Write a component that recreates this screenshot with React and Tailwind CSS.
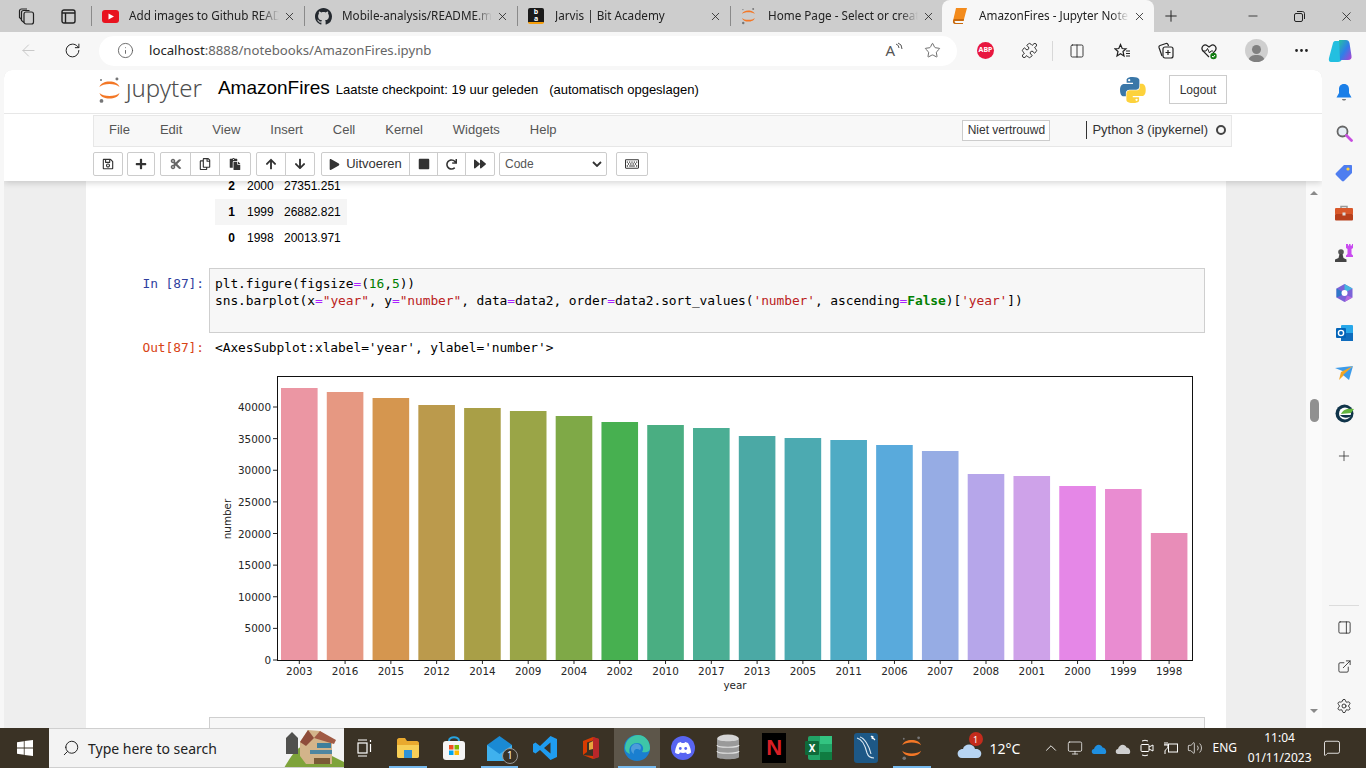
import {
  ArrowLeft, RotateCw, Info, Star, X, Plus, Minus, Search, Puzzle, Columns2, Ellipsis,
  PanelRight, ExternalLink, Settings, ChevronUp, Volume2, MessageSquare, Monitor,
} from "lucide-react";
import {
  FaRegSave, FaPlus, FaCut, FaRegCopy, FaPaste, FaArrowUp, FaArrowDown, FaPlay, FaStop, FaRedo, FaForward, FaRegKeyboard,
} from "react-icons/fa";

const bars = [
  ["2003", 388, "#eb96a3"], ["2016", 392, "#e69882"], ["2015", 398, "#d5964f"], ["2012", 405, "#bb9a4c"],
  ["2014", 408, "#a99f47"], ["2009", 411, "#9aa547"], ["2004", 416, "#7fa947"], ["2002", 422, "#47b050"],
  ["2010", 425, "#4aae82"], ["2017", 428, "#4bae94"], ["2013", 436, "#4ba9a5"], ["2005", 438, "#4caab1"],
  ["2011", 440, "#4fabc4"], ["2006", 445, "#59aadc"], ["2007", 451, "#96ace4"], ["2008", 474, "#b6a6ea"],
  ["2001", 476, "#cea2e9"], ["2000", 486, "#e587e7"], ["1999", 489, "#e98cd1"], ["1998", 533, "#e88db8"],
];

const yTicks = [0, 5000, 10000, 15000, 20000, 25000, 30000, 35000, 40000];

function JupyterMark({ size = 28 }) {
  return (
    <svg width={size * 0.82} height={size} viewBox="0 0 23 28">
      <path d="M1.5 11C3 3.5 20 3.5 21.5 11C18 7 5 7 1.5 11Z" fill="#f37726" />
      <path d="M1.5 17C3 24.5 20 24.5 21.5 17C18 21 5 21 1.5 17Z" fill="#f37726" />
      <circle cx="19" cy="3" r="1.5" fill="#767677" />
      <circle cx="3.5" cy="25" r="1.9" fill="#767677" />
      <circle cx="3" cy="4" r="1" fill="#767677" />
    </svg>
  );
}

function Tab({ icon, title, active }) {
  return (
    <div className={`relative flex h-8 w-[212px] shrink-0 items-center pl-[10px] pr-2 ${active ? "rounded-t-lg bg-[#f7f7f7]" : ""}`}>
      <div className="flex w-[27px] shrink-0 items-center">{icon}</div>
      <span className="w-[150px] overflow-hidden whitespace-nowrap text-[11.7px] text-[#222] [mask-image:linear-gradient(to_right,#000_88%,transparent)]">{title}</span>
      <X size={13} strokeWidth={1.5} className="ml-auto text-[#222]" />
    </div>
  );
}

function TabSep() {
  return <div className="h-5 w-px shrink-0 bg-[#8a8a8a]" />;
}

function TabBar() {
  return (
    <div className="flex h-8 items-center bg-[#cdcdcd]">
      <div className="flex w-[52px] justify-center">
        <svg width="17" height="17" viewBox="0 0 17 17" fill="none" stroke="#222" strokeWidth="1.2">
          <rect x="6" y="4" width="9.5" height="12" rx="2" />
          <path d="M6 14.5L3.5 12.5V4.5C3.5 3 4.5 2.5 5.5 2.5H11.5M3.5 11.5L1.5 9.5V3C1.5 1.8 2.3 1 3.5 1H9" />
        </svg>
      </div>
      <div className="ml-[3px] flex w-[26px] justify-center">
        <svg width="15" height="15" viewBox="0 0 15 15" fill="none" stroke="#222" strokeWidth="1.4">
          <rect x="1" y="1" width="13" height="13" rx="2" />
          <path d="M1 4H14M4.5 4V14" />
        </svg>
      </div>
      <div className="ml-[10px]"><TabSep /></div>
      <Tab
        title="Add images to Github READ"
        icon={
          <svg width="17" height="13" viewBox="0 0 17 13">
            <rect width="17" height="13" rx="3" fill="#e8131f" />
            <path d="M6.5 3.5L12 6.5L6.5 9.5Z" fill="#fff" />
          </svg>
        }
      />
      <TabSep />
      <Tab
        title="Mobile-analysis/README.md"
        icon={
          <svg width="17" height="17" viewBox="0 0 16 16" fill="#24292f">
            <path d="M8 0C3.58 0 0 3.58 0 8c0 3.54 2.29 6.53 5.47 7.59.4.07.55-.17.55-.38 0-.19-.01-.82-.01-1.49-2.01.37-2.53-.49-2.69-.94-.09-.23-.48-.94-.82-1.13-.28-.15-.68-.52-.01-.53.63-.01 1.08.58 1.23.82.72 1.21 1.87.87 2.33.66.07-.52.28-.87.51-1.07-1.78-.2-3.64-.89-3.64-3.95 0-.87.31-1.59.82-2.15-.08-.2-.36-1.02.08-2.12 0 0 .67-.21 2.2.82.64-.18 1.32-.27 2-.27s1.36.09 2 .27c1.53-1.04 2.2-.82 2.2-.82.44 1.1.16 1.92.08 2.12.51.56.82 1.27.82 2.15 0 3.07-1.87 3.75-3.65 3.95.29.25.54.73.54 1.48 0 1.07-.01 1.93-.01 2.2 0 .21.15.46.55.38A8.01 8.01 0 0016 8c0-4.42-3.58-8-8-8z" />
          </svg>
        }
      />
      <TabSep />
      <Tab
        title="Jarvis | Bit Academy"
        icon={
          <div className="flex h-4 w-4 flex-col items-center justify-center rounded-[2px] border-b-2 border-[#f59e0b] bg-[#1b1b1b] text-[7px] font-bold leading-[7px] text-white">
            <span>b</span>
            <span>a</span>
          </div>
        }
      />
      <TabSep />
      <Tab title="Home Page - Select or create" icon={<JupyterMark size={18} />} />
      <div className="-ml-[1px]">
        <Tab
          active
          title="AmazonFires - Jupyter Notebook"
          icon={
            <svg width="15" height="16" viewBox="0 0 15 16">
              <path d="M4 0H15L11.5 13H1Z" fill="#f38b1c" />
              <path d="M1 13C1 11.5 2 11 3 11H12L11.5 13H3C2 13 3 15 4 15H11V16H3C1.5 16 .5 14.5 1 13Z" fill="#c96a0d" />
            </svg>
          }
        />
      </div>
      <Plus size={18} strokeWidth={1.3} className="ml-[8px] text-[#222]" />
      <Minus size={14} strokeWidth={1.4} className="ml-[66px] text-[#222]" />
      <svg width="11" height="11" viewBox="0 0 11 11" fill="none" stroke="#222" strokeWidth="1" className="ml-[34px]">
        <rect x=".5" y="2.5" width="8" height="8" rx="1.5" />
        <path d="M3 .5H8.5C9.6.5 10.5 1.4 10.5 2.5V8" />
      </svg>
      <X size={15} strokeWidth={1.3} className="ml-[34px] text-[#222]" />
    </div>
  );
}

function AddressBar() {
  return (
    <div className="flex h-[37px] items-center bg-[#f7f7f7]">
      <div className="flex w-[56px] justify-center">
        <ArrowLeft size={19} strokeWidth={1.2} className="text-[#c6c6c6]" />
      </div>
      <div className="flex w-[32px] justify-center">
        <RotateCw size={17} strokeWidth={1.4} className="text-[#222]" />
      </div>
      <div className="ml-[11px] flex h-[30px] w-[858px] items-center rounded-full bg-white pl-[18px] pr-4">
        <Info size={17} strokeWidth={1.2} className="text-[#555]" />
        <span className="ml-[15px] text-[13.2px] text-[#222]">
          localhost<span className="text-[#666]">:8888/notebooks/AmazonFires.ipynb</span>
        </span>
        <span className="ml-auto flex items-center text-[15px] text-[#555]">
          A
          <svg width="8" height="10" viewBox="0 0 8 10" fill="none" stroke="#555" className="-mt-2">
            <path d="M1 2Q4 3 4 6M3 1Q7 2 7 7" />
          </svg>
        </span>
        <Star size={17} strokeWidth={1.2} className="ml-[21px] text-[#555]" />
      </div>
      <div className="ml-[20px] flex h-[17px] w-[17px] items-center justify-center rounded-full bg-[#e8173f] text-[7px] font-bold text-white">ABP</div>
      <Puzzle size={17} strokeWidth={1.3} className="ml-[27px] text-[#222]" />
      <div className="ml-[14px] h-5 w-px bg-[#d8d8d8]" />
      <Columns2 size={16} strokeWidth={1.3} className="ml-[16px] text-[#222]" />
      <svg width="17" height="16" viewBox="0 0 17 16" fill="none" stroke="#222" strokeWidth="1.2" className="ml-[29px]">
        <path d="M6.5 1.5L8.2 5.5L12 5.8L9 8.5L10 13L6.5 10.7L3 13L4 8.5L1 5.8L4.8 5.5Z" />
        <path d="M12 8H16M12 10.5H16M12 13H16" />
      </svg>
      <svg width="17" height="17" viewBox="0 0 17 17" fill="none" stroke="#222" strokeWidth="1.2" className="ml-[26px]">
        <path d="M5 14L2 5.5C1.7 4.5 2.2 3.8 3 3.5L9 1.5C10 1.2 10.7 1.7 11 2.5L11.5 4" />
        <rect x="6" y="5" width="10" height="11" rx="2" />
        <path d="M11 8V13M8.5 10.5H13.5" />
      </svg>
      <svg width="18" height="18" viewBox="0 0 18 18" className="ml-[26px]">
        <path d="M9 15L2.5 8.5C.5 5 4.5 1.5 7 3.5L9 5L11 3.5C13.5 1.5 17.5 5 15.5 8.5L13 11" fill="none" stroke="#222" strokeWidth="1.2" />
        <path d="M2.5 9H6L7.5 6.5L9.5 11L11 9H13" fill="none" stroke="#222" strokeWidth="1" />
        <circle cx="13.5" cy="14" r="3.2" fill="#107c10" />
        <path d="M12 14L13.2 15.2L15 13" fill="none" stroke="#fff" strokeWidth="1" />
      </svg>
      <div className="ml-[27px] flex h-[23px] w-[23px] flex-col items-center justify-end overflow-hidden rounded-full bg-[#cfcfcf]">
        <div className="mb-[1px] h-[9px] w-[9px] rounded-full bg-[#808080]" />
        <div className="h-[7px] w-[17px] rounded-t-full bg-[#808080]" />
      </div>
      <Ellipsis size={17} strokeWidth={2} className="ml-[25px] text-[#222]" />
      <svg width="24" height="24" viewBox="0 0 24 24" className="ml-[18px]">
        <defs>
          <linearGradient id="cop" x1="0" y1="0" x2="1" y2="1">
            <stop offset="0" stopColor="#25c2a0" />
            <stop offset="0.5" stopColor="#2f7fe8" />
            <stop offset="1" stopColor="#b33fd0" />
          </linearGradient>
        </defs>
        <path d="M7 2H19L14 20C13.5 22 12 23 10 23H3C1 23 .5 21 1 19L5 4C5.3 3 6 2 7 2Z" fill="#23bfe0" />
        <path d="M11 1H18C20 1 21 2 21.5 4L23.5 17C24 19.5 22.5 21 20 21H12Z" fill="url(#cop)" />
      </svg>
    </div>
  );
}

function ToolBtn({ children, w = "w-7", className = "" }) {
  return (
    <div className={`flex h-[24px] shrink-0 items-center justify-center border border-[#ccc] bg-white text-[#333] ${w} ${className}`}>
      {children}
    </div>
  );
}

function NotebookHeader() {
  return (
    <div className="relative z-10 shrink-0 rounded-t-lg bg-white font-['Liberation_Sans',sans-serif] text-[#000] shadow-[0_2px_6px_rgba(0,0,0,0.16)]">
      <div className="flex h-[44px] items-center border-b border-[#e7e7e7] pb-[4px] pl-[94px] pr-[95px]">
        <JupyterMark size={28} />
        <span className="ml-[5px] -mt-[3px] font-['Noto_Sans',sans-serif] text-[24px] font-light leading-none text-[#4e4e4e]">ȷupyter</span>
        <span className="ml-[16px] -mt-[3px] text-[19px]">AmazonFires</span>
        <span className="ml-[6px] mt-[1px] text-[13px]">Laatste checkpoint: 19 uur geleden</span>
        <span className="ml-[11px] mt-[1px] text-[13px]">(automatisch opgeslagen)</span>
        <svg width="28" height="28" viewBox="0 0 110 110" className="ml-auto">
          <path d="M54 4C28 4 30 15 30 15V27H55V31H20S4 29 4 55S18 80 18 80H27V68S26 54 41 54H66S80 54 80 40V17S82 4 54 4ZM40 12A4.5 4.5 0 1140 21A4.5 4.5 0 0140 12Z" fill="#3a77a8" />
          <path d="M55 106C81 106 79 95 79 95V83H54V79H89S105 81 105 55S91 30 91 30H82V42S83 56 68 56H43S29 56 29 70V93S27 106 55 106ZM69 98A4.5 4.5 0 1169 89A4.5 4.5 0 0169 98Z" fill="#fdd23c" />
        </svg>
        <div className="ml-[22px] flex h-[29px] w-[58px] items-center justify-center border border-[#ccc] text-[12px] text-[#333]">Logout</div>
      </div>
      <div className="ml-[89px] mr-[90px] mt-[1px] flex h-[32px] items-center whitespace-nowrap border border-[#e7e7e7] bg-[#f8f8f8] pb-[2px] pr-[5px] text-[13px] text-[#555]">
        {["File", "Edit", "View", "Insert", "Cell", "Kernel", "Widgets", "Help"].map((m) => (
          <span key={m} className="px-[15px]">{m}</span>
        ))}
        <div className="ml-auto flex h-[21px] w-[88px] shrink-0 items-center justify-center border border-[#ccc] bg-white text-[12px] text-[#333]">Niet vertrouwd</div>
        <div className="ml-[36px] flex h-[18px] shrink-0 items-center border-l border-[#333] pl-[5px] text-[#333]">Python 3 (ipykernel)</div>
        <div className="ml-[8px] h-[10px] w-[10px] shrink-0 rounded-full border-2 border-[#444]" />
      </div>
      <div className="flex h-[34px] items-center pl-[89px] text-[11px]">
        <ToolBtn w="w-[30px]" className="rounded-[2px]"><FaRegSave size={12} /></ToolBtn>
        <ToolBtn w="w-[28px]" className="ml-[4px] rounded-[2px]"><FaPlus size={12} /></ToolBtn>
        <ToolBtn w="w-[31px]" className="ml-[5px] rounded-l-[2px]"><FaCut size={12} className="text-[#666]" /></ToolBtn>
        <ToolBtn w="w-[30px]" className="-ml-px"><FaRegCopy size={12} /></ToolBtn>
        <ToolBtn w="w-[32px]" className="-ml-px rounded-r-[2px]"><FaPaste size={12} /></ToolBtn>
        <ToolBtn w="w-[30px]" className="ml-[5px] rounded-l-[2px]"><FaArrowUp size={12} /></ToolBtn>
        <ToolBtn w="w-[30px]" className="-ml-px rounded-r-[2px]"><FaArrowDown size={12} /></ToolBtn>
        <ToolBtn w="w-[89px]" className="ml-[6px] rounded-l-[2px]">
          <FaPlay size={11} />
          <span className="ml-[6px] text-[13px]">Uitvoeren</span>
        </ToolBtn>
        <ToolBtn w="w-[29px]" className="-ml-px"><FaStop size={12} /></ToolBtn>
        <ToolBtn w="w-[29px]" className="-ml-px"><FaRedo size={11} /></ToolBtn>
        <ToolBtn w="w-[30px]" className="-ml-px rounded-r-[2px]"><FaForward size={12} /></ToolBtn>
        <div className="ml-[4px] flex h-[24px] w-[108px] items-center justify-between rounded-[2px] border border-[#ccc] bg-white pl-[5px] pr-[4px] text-[12px] text-[#555]">
          Code
          <svg width="10" height="6" viewBox="0 0 10 6" fill="none" stroke="#333" strokeWidth="1.8">
            <path d="M1 1L5 5L9 1" />
          </svg>
        </div>
        <ToolBtn w="w-[32px]" className="ml-[9px] rounded-[2px]"><FaRegKeyboard size={14} /></ToolBtn>
      </div>
    </div>
  );
}

function TableRow({ idx, year, num, shaded }) {
  return (
    <div className={`flex h-[26px] w-[132px] items-center text-[12px] text-black ${shaded ? "bg-[#f5f5f5]" : ""}`}>
      <span className="w-[20px] text-right font-bold">{idx}</span>
      <span className="ml-[12px] w-[26px]">{year}</span>
      <span className="ml-[11px]">{num}</span>
    </div>
  );
}

const Op = ({ children }) => <span className="text-[#aa22ff]">{children}</span>;
const Str = ({ children }) => <span className="text-[#ba2121]">{children}</span>;
const Num = ({ children }) => <span className="text-[#008000]">{children}</span>;

function Chart() {
  return (
    <svg width="990" height="340" viewBox="215 365 990 340" className="block" fontFamily="DejaVu Sans, sans-serif" fontSize="10.4" fill="#262626">
      {bars.map(([year, top, color], i) => {
        const x = 281 + i * 45.78;
        return (
          <g key={year}>
            <rect x={x} y={top} width="36.6" height={660 - top} fill={color} />
            <line x1={x + 18.3} x2={x + 18.3} y1="660" y2="664" stroke="#262626" />
            <text x={x + 18.3} y="675" textAnchor="middle">{year}</text>
          </g>
        );
      })}
      {yTicks.map((t) => {
        const y = 660 - t * 0.006325;
        return (
          <g key={t}>
            <line x1="273" x2="277" y1={y} y2={y} stroke="#262626" />
            <text x="271" y={y + 4} textAnchor="end">{t}</text>
          </g>
        );
      })}
      <rect x="277.5" y="376.5" width="915" height="284" fill="none" stroke="#111" />
      <text x="735" y="689" textAnchor="middle">year</text>
      <text x="231" y="519" textAnchor="middle" transform="rotate(-90 231 519)">number</text>
    </svg>
  );
}

function NotebookBody() {
  return (
    <div className="flex min-h-0 flex-1 overflow-hidden bg-[#eeeeee]">
      <div className="ml-[82px] w-[1140px] shrink-0 overflow-hidden bg-white">
        <div className="-mt-2 ml-[129px] font-['Liberation_Sans',sans-serif]">
          <TableRow idx="2" year="2000" num="27351.251" />
          <TableRow idx="1" year="1999" num="26882.821" shaded />
          <TableRow idx="0" year="1998" num="20013.971" />
        </div>
        <div className="mt-[17px] flex font-['DejaVu_Sans_Mono',monospace] text-[12.9px] leading-[17px] tracking-[-0.07px]">
          <div className="w-[118px] pt-[7px] text-right text-[#303f9f]">In [87]:</div>
          <div className="ml-[5px] h-[65px] w-[996px] border border-[#cfcfcf] bg-[#f7f7f7] px-[5px] pt-[6px] text-black">
            <div>plt.figure(figsize<Op>=</Op>(<Num>16</Num>,<Num>5</Num>))</div>
            <div className="whitespace-nowrap">
              sns.barplot(x<Op>=</Op><Str>"year"</Str>, y<Op>=</Op><Str>"number"</Str>, data<Op>=</Op>data2, order<Op>=</Op>data2.sort_values(<Str>'number'</Str>, ascending<Op>=</Op><span className="font-bold text-[#008000]">False</span>)[<Str>'year'</Str>])
            </div>
          </div>
        </div>
        <div className="mt-[6px] flex font-['DejaVu_Sans_Mono',monospace] text-[12.9px] leading-[17px] tracking-[-0.07px]">
          <div className="w-[118px] text-right text-[#d84315]">Out[87]:</div>
          <div className="ml-[11px] text-black">&lt;AxesSubplot:xlabel='year', ylabel='number'&gt;</div>
        </div>
        <div className="ml-[129px] mt-[9px]"><Chart /></div>
        <div className="ml-[123px] mt-[12px] h-10 w-[996px] border border-[#cfcfcf] bg-[#f7f7f7]" />
      </div>
      <div className="ml-auto flex w-[16px] shrink-0 flex-col items-center bg-[#fafafa] pt-[10px]">
        <div className="h-0 w-0 border-x-[4px] border-b-[4px] border-x-transparent border-b-[#8a8a8a]" />
        <div className="mt-[204px] h-[23px] w-[9px] rounded-full bg-[#909090]" />
        <div className="mt-[287px] h-0 w-0 border-x-[4px] border-t-[4px] border-x-transparent border-t-[#8a8a8a]" />
      </div>
    </div>
  );
}

function SideItem({ children }) {
  return <div className="flex h-10 items-center justify-center">{children}</div>;
}

function Sidebar() {
  return (
    <div className="flex w-[44px] shrink-0 flex-col bg-[#f7f7f7] pt-[3px]">
      <SideItem>
        <svg width="16" height="18" viewBox="0 0 16 18">
          <path d="M8 0C4.5 0 3 2.5 3 5V9L0.5 13.5H15.5L13 9V5C13 2.5 11.5 0 8 0Z" fill="#1b7fe8" />
          <path d="M6 15H10C10 17 6 17 6 15Z" fill="#777" />
        </svg>
      </SideItem>
      <SideItem>
        <svg width="17" height="17" viewBox="0 0 17 17">
          <circle cx="6.5" cy="6.5" r="5" fill="#e6eef5" stroke="#666" strokeWidth="1.8" />
          <path d="M10.5 10.5L15.5 15.5" stroke="#c74ee0" strokeWidth="2.8" strokeLinecap="round" />
        </svg>
      </SideItem>
      <SideItem>
        <svg width="18" height="18" viewBox="0 0 18 18">
          <path d="M9 1H16C16.6 1 17 1.4 17 2V9L9 17C8.4 17.6 7.6 17.6 7 17L1 11C.4 10.4.4 9.6 1 9Z" fill="#4f7ef0" />
          <circle cx="13" cy="5" r="1.6" fill="#ffd23c" />
        </svg>
      </SideItem>
      <SideItem>
        <svg width="18" height="16" viewBox="0 0 18 16">
          <path d="M6 3V1.5H12V3" fill="none" stroke="#999" strokeWidth="1.5" />
          <rect y="3" width="18" height="6.5" rx="1" fill="#d9582a" />
          <rect y="9" width="18" height="6.5" rx="1" fill="#b8401c" />
          <rect x="7.5" y="7.5" width="3" height="3" fill="#ddd" />
        </svg>
      </SideItem>
      <SideItem>
        <svg width="18" height="18" viewBox="0 0 18 18">
          <path d="M11 0H13V1.5H14V0H15.5V1.5H17V0H18V4L16.5 5V10L18 11.5V13H11V11.5L12.5 10V5L11 4Z" fill="#c94bf0" />
          <circle cx="6" cy="8" r="2.8" fill="#555" />
          <path d="M4.5 10H7.5L8.5 14L11.5 15.5V18H0V15.5L3.5 14Z" fill="#444" />
        </svg>
      </SideItem>
      <SideItem>
        <svg width="17" height="18" viewBox="0 0 17 18">
          <path d="M8.5 0L16.5 4.5V13.5L8.5 18L.5 13.5V4.5Z" fill="#7b63d8" />
          <path d="M8.5 0L16.5 4.5L11 7.5L8.5 6Z" fill="#46b6e0" />
          <path d="M.5 13.5V4.5L6 7.5V11Z" fill="#2f78c8" />
          <path d="M16.5 13.5L8.5 18L11 11.5Z" fill="#b46ae0" />
          <circle cx="8.5" cy="9" r="3" fill="#fff" />
        </svg>
      </SideItem>
      <SideItem>
        <svg width="17" height="16" viewBox="0 0 17 16">
          <rect x="5" y="0" width="12" height="16" rx="1" fill="#28a8ea" />
          <rect x="5" y="8" width="12" height="8" fill="#0f6cbd" />
          <rect x="0" y="3" width="10" height="10" rx="1" fill="#0364b8" />
          <circle cx="5" cy="8" r="2.6" fill="none" stroke="#fff" strokeWidth="1.4" />
        </svg>
      </SideItem>
      <SideItem>
        <svg width="18" height="14" viewBox="0 0 18 14">
          <path d="M0 2L18 0L10 6Z" fill="#3d9be9" />
          <path d="M18 0L6 6L4 14Z" fill="#f5a623" />
          <path d="M18 0L14 14L8 9Z" fill="#3d9be9" />
        </svg>
      </SideItem>
      <SideItem>
        <svg width="19" height="19" viewBox="0 0 19 19">
          <circle cx="9.5" cy="9.5" r="9" fill="#10344a" />
          <circle cx="10" cy="9.5" r="6" fill="#fff" />
          <path d="M6 10C8 5 13 4 19 5L16 9Z" fill="#63b53f" />
          <path d="M5 11H17C15 14 8 15 5 11Z" fill="#10344a" />
        </svg>
      </SideItem>
      <div className="flex h-[46px] items-center justify-center">
        <Plus size={16} strokeWidth={1.1} className="text-[#222]" />
      </div>
      <div className="mx-[7px] mt-auto border-t border-[#dcdcdc]" />
      <div className="flex h-10 items-center justify-center pt-[2px]">
        <PanelRight size={15} strokeWidth={1.3} className="text-[#222]" />
      </div>
      <SideItem><ExternalLink size={15} strokeWidth={1.3} className="text-[#222]" /></SideItem>
      <div className="flex h-[42px] items-start justify-center pt-[12px]">
        <Settings size={16} strokeWidth={1.3} className="text-[#222]" />
      </div>
    </div>
  );
}

function TaskBtn({ children, open, active }) {
  return (
    <div className={`relative flex h-10 w-[45.8px] shrink-0 items-center justify-center ${active ? "bg-[#5d564a]" : ""}`}>
      {children}
      {(open || active) && <div className="absolute bottom-0 left-[4px] right-[4px] h-[2px] bg-[#76b9ed]" />}
    </div>
  );
}

function TrayBtn({ children }) {
  return <div className="flex h-10 w-6 shrink-0 items-center justify-center text-white">{children}</div>;
}

function Taskbar() {
  return (
    <div className="flex h-10 shrink-0 items-center bg-[#3a3225] font-['Noto_Sans',sans-serif] text-white">
      <div className="flex w-[49px] shrink-0 justify-center">
        <svg width="16" height="16" viewBox="0 0 16 16" fill="#fff">
          <path d="M0 2.2L6.8 1.2V7.6H0ZM7.6 1.1L16 0V7.6H7.6ZM0 8.4H6.8V14.8L0 13.8ZM7.6 8.4H16V16L7.6 14.9Z" />
        </svg>
      </div>
      <div className="flex h-10 w-[295px] shrink-0 items-center overflow-hidden border-y border-[#cfcfcf] bg-[#f3f3f3] pl-[13px]">
        <Search size={18} strokeWidth={1.3} className="-scale-x-100 text-[#222]" />
        <span className="ml-[8px] text-[14px] text-[#222]">Type here to search</span>
        <svg width="60" height="40" viewBox="0 0 60 40" className="ml-auto shrink-0">
          <path d="M0 40C8 26 14 18 24 16L60 34V40Z" fill="#7ea33a" />
          <path d="M2 10L8 4L14 10V26H2Z" fill="#50504e" />
          <path d="M16 14L24 2L36 3L48 12V36H22L16 28Z" fill="#d3b48a" />
          <path d="M16 14L24 2L30 10L22 18Z" fill="#8e4c3a" />
          <path d="M30 10L36 3L52 12L50 16Z" fill="#a05a44" />
          <rect x="33" y="15" width="14" height="5" fill="#3f7f9c" />
          <rect x="26" y="22" width="22" height="4" fill="#4f86a0" />
          <rect x="30" y="30" width="16" height="6" fill="#7a5a36" />
        </svg>
      </div>
      <div className="flex w-[41px] shrink-0 justify-center">
        <svg width="16" height="18" viewBox="0 0 16 18" fill="none" stroke="#fff" strokeWidth="1.2">
          <rect x="1" y="4" width="9" height="10" />
          <path d="M1 1H10M1 17H10M13.5 1V3M13.5 5V13" />
        </svg>
      </div>
      <TaskBtn open>
        <svg width="22" height="20" viewBox="0 0 22 20">
          <path d="M0 2C0 1 1 0 2 0H8L10 3H20C21 3 22 4 22 5V18C22 19 21 20 20 20H2C1 20 0 19 0 18Z" fill="#e9a92f" />
          <path d="M0 7H22V18C22 19 21 20 20 20H2C1 20 0 19 0 18Z" fill="#f7cf57" />
          <rect x="7" y="12" width="8" height="8" fill="#2f93d8" />
        </svg>
      </TaskBtn>
      <TaskBtn>
        <svg width="22" height="24" viewBox="0 0 22 24">
          <path d="M6 5C6 0 16 0 16 5" fill="none" stroke="#27a3df" strokeWidth="2" />
          <rect y="5" width="22" height="19" rx="3" fill="#f5f5f5" />
          <rect x="6" y="9" width="4.5" height="4.5" fill="#f25022" />
          <rect x="11.5" y="9" width="4.5" height="4.5" fill="#7fba00" />
          <rect x="6" y="14.5" width="4.5" height="4.5" fill="#00a4ef" />
          <rect x="11.5" y="14.5" width="4.5" height="4.5" fill="#ffb900" />
        </svg>
      </TaskBtn>
      <TaskBtn open>
        <div className="relative">
          <svg width="25" height="25" viewBox="0 0 25 25">
            <path d="M0 9L12.5 0L25 9V25H0Z" fill="#1a8ad4" />
            <path d="M0 9L12.5 18L25 9V25H0Z" fill="#3fb1ee" />
          </svg>
          <div className="absolute -bottom-[3px] -right-[6px] flex h-4 w-4 items-center justify-center rounded-full border border-[#999] bg-[#3a3225] text-[10px]">1</div>
        </div>
      </TaskBtn>
      <TaskBtn>
        <svg width="24" height="24" viewBox="0 0 24 24">
          <path d="M17.5 0L24 3V21L17.5 24L7 14L2.5 17.5L0 16V8L2.5 6.5L7 10ZM17.5 6.5L11 12L17.5 17.5Z" fill="#1f9cf0" fillRule="evenodd" />
        </svg>
      </TaskBtn>
      <TaskBtn>
        <svg width="16" height="22" viewBox="0 0 16 22">
          <path d="M0 4L10 0L16 2V20L10 22L0 18L10 19V3.5L4 5.5V15L0 18Z" fill="#d83b01" />
          <path d="M10 0L16 2V20L10 22Z" fill="#b7272a" />
          <path d="M6 6L10 4V12L6 13Z" fill="#e8a33d" />
        </svg>
      </TaskBtn>
      <TaskBtn active>
        <svg width="26" height="26" viewBox="0 0 26 26">
          <circle cx="13" cy="13" r="13" fill="#1a7fd0" />
          <path d="M1 13C1 5 8 0 14 0C21 0 26 6 26 13C26 17 22 18 18 17C21 13 18 8 13 8C7 8 4 13 6 19C3 18 1 16 1 13Z" fill="#3ec6a8" />
          <path d="M7 14C7 10 11 8 14 9C17 10 18 13 16 15C13 13 9 14 10 19C8 18 7 16 7 14Z" fill="#e9f7fb" opacity="0.25" />
        </svg>
      </TaskBtn>
      <TaskBtn>
        <div className="flex h-6 w-6 items-center justify-center rounded-full bg-[#5865f2]">
          <svg width="16" height="12" viewBox="0 0 16 12" fill="#fff">
            <path d="M3 1C5 0 6 0 6 0L6.5 1H9.5L10 0C10 0 11 0 13 1C15 4 16 8 16 10.5C15 11.5 13 12 12 12L11 10.5C9 11 7 11 5 10.5L4 12C3 12 1 11.5 0 10.5C0 8 1 4 3 1Z" />
            <circle cx="5.3" cy="6.5" r="1.4" fill="#5865f2" />
            <circle cx="10.7" cy="6.5" r="1.4" fill="#5865f2" />
          </svg>
        </div>
      </TaskBtn>
      <TaskBtn>
        <svg width="24" height="28" viewBox="0 0 24 28">
          <ellipse cx="12" cy="5" rx="11" ry="4.5" fill="#d5d5d5" />
          <path d="M1 5V23C1 26 23 26 23 23V5C23 8 1 8 1 5Z" fill="#9a9a9a" />
          <path d="M1 11C1 14 23 14 23 11M1 17C1 20 23 20 23 17" fill="none" stroke="#e2e2e2" strokeWidth="1.2" />
        </svg>
      </TaskBtn>
      <TaskBtn>
        <div className="flex h-[30px] w-6 items-center justify-center bg-black font-['Liberation_Sans',sans-serif] text-[22px] font-bold leading-none text-[#d81f26]">N</div>
      </TaskBtn>
      <TaskBtn>
        <div className="relative h-6 w-6 rounded-[2px] bg-[#21a366]">
          <div className="absolute right-0 top-0 h-2 w-3 bg-[#33c481]" />
          <div className="absolute bottom-0 right-0 h-2 w-3 bg-[#107c41]" />
          <div className="absolute left-[-3px] top-[5px] flex h-[14px] w-[14px] items-center justify-center rounded-[1px] bg-[#0f6a3a] text-[10px] font-bold leading-none text-white">X</div>
        </div>
      </TaskBtn>
      <TaskBtn>
        <svg width="24" height="30" viewBox="0 0 24 30">
          <rect width="24" height="30" rx="3" fill="#1d5886" />
          <path d="M3 5C8 6 11 12 13 20C14 23 17 25 20 25M6 4C10 5 15 12 17 21" fill="none" stroke="#dbe8f2" strokeWidth="1.1" />
          <path d="M17 3L21 7M19 3L18 6" stroke="#fff" strokeWidth="1.2" />
        </svg>
      </TaskBtn>
      <TaskBtn open>
        <JupyterMark size={26} />
      </TaskBtn>
      <div className="ml-[20px] flex w-[30px] shrink-0 justify-center">
        <div className="relative">
          <svg width="26" height="20" viewBox="0 0 26 20">
            <path d="M5 20C-1 20-1 11 6 11C7 5 17 5 18 11C26 10 26 20 20 20Z" fill="#b7d4f2" />
          </svg>
          <div className="absolute -top-[6px] right-0 flex h-[14px] w-[14px] items-center justify-center rounded-full bg-[#c42b1c] text-[9px] leading-none">1</div>
        </div>
      </div>
      <span className="ml-[5px] w-[49px] shrink-0 text-[14px]">12°C</span>
      <TrayBtn><ChevronUp size={18} strokeWidth={1.2} /></TrayBtn>
      <TrayBtn><Monitor size={16} strokeWidth={1.1} /></TrayBtn>
      <TrayBtn>
        <svg width="16" height="11" viewBox="0 0 16 11">
          <path d="M3 11C0 11 0 6 3 6C4 1 10 0 11.5 4.5C15 4 17 11 13 11Z" fill="#1f8fe0" />
        </svg>
      </TrayBtn>
      <TrayBtn>
        <svg width="16" height="11" viewBox="0 0 16 11">
          <path d="M3 11C0 11 0 6 3 6C4 1 10 0 11.5 4.5C15 4 17 11 13 11Z" fill="#cfcfcf" />
        </svg>
      </TrayBtn>
      <TrayBtn>
        <svg width="14" height="18" viewBox="0 0 14 18" fill="none" stroke="#fff" strokeWidth="1">
          <rect x="1" y="5.5" width="8" height="7" rx="1" />
          <path d="M9 8L13 6V12L9 10M2 2Q5 .5 8 2M2 16Q5 17.5 8 16" />
        </svg>
      </TrayBtn>
      <TrayBtn>
        <svg width="16" height="14" viewBox="0 0 16 14" fill="none" stroke="#fff" strokeWidth="1">
          <rect x="5.5" y="3" width="9" height="8" />
          <path d="M2 1V4M4 1V4M1 4H5V6C5 8 2 8 2 10V13" />
        </svg>
      </TrayBtn>
      <TrayBtn><Volume2 size={16} strokeWidth={1.1} /></TrayBtn>
      <span className="ml-[6px] text-[12px]">ENG</span>
      <div className="ml-[3px] flex w-[79px] shrink-0 flex-col items-center text-[12px] leading-[20px]">
        <span>11:04</span>
        <span>01/11/2023</span>
      </div>
      <div className="ml-[4px] flex w-[18px] shrink-0 justify-center">
        <MessageSquare size={18} strokeWidth={1.1} />
      </div>
    </div>
  );
}

export default function App() {
  return (
    <div className="flex h-screen w-[1366px] flex-col overflow-hidden bg-[#f7f7f7] font-['Noto_Sans',sans-serif]">
      <TabBar />
      <AddressBar />
      <div className="flex min-h-0 flex-1 pl-[4px] pt-[1px]">
        <div className="flex min-w-0 flex-1 flex-col overflow-hidden rounded-t-lg">
          <NotebookHeader />
          <NotebookBody />
        </div>
        <Sidebar />
      </div>
      <Taskbar />
    </div>
  );
}
